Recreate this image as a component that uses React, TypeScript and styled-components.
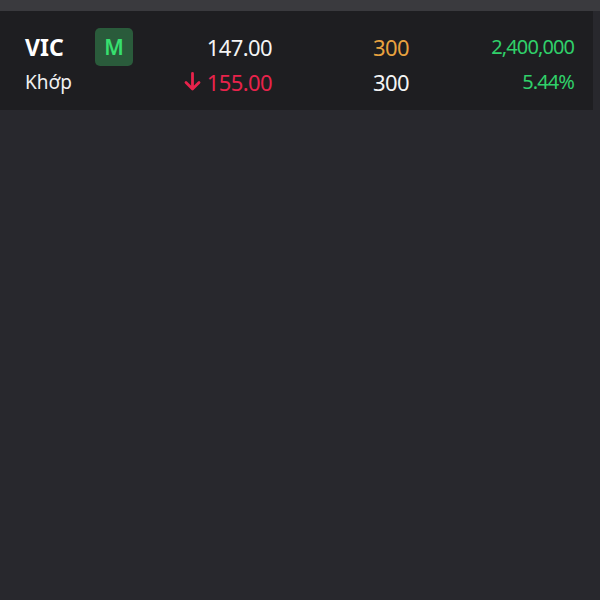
import styled, { createGlobalStyle } from 'styled-components'

const GlobalStyle = createGlobalStyle`
  html, body {
    margin: 0;
    padding: 0;
    background-color: #28282d;
  }
  body {
    font-family: 'Noto Sans', 'Open Sans', sans-serif;
    color: #f2f2f2;
  }
`

const Screen = styled.main`
  width: 600px;
  height: 600px;
  background-color: #28282d;
  overflow: hidden;
`

const TopBar = styled.div`
  height: 11px;
  background-color: #3a3a3e;
`

const Row = styled.section`
  display: grid;
  grid-template-columns: 70px 45px 132px 137px 165px;
  grid-template-rows: 35px 35px;
  align-items: center;
  align-content: start;
  height: 99px;
  padding: 18px 19px 0 25px;
  box-sizing: border-box;
  background-color: #1e1e21;
  margin-right: 7px;
`

const Symbol = styled.span`
  font-size: 23px;
  font-weight: 700;
  color: #ffffff;
`

const Label = styled.span`
  font-size: 19px;
  color: #f0f0f0;
`

const Badge = styled.span`
  display: flex;
  align-items: center;
  justify-content: center;
  width: 38px;
  height: 38px;
  border-radius: 5px;
  background-color: #2a5b3b;
  color: #37e06f;
  font-size: 21px;
  font-weight: 600;
`

const Cell = styled.span<{ $color: string; $small?: boolean }>`
  display: flex;
  align-items: center;
  justify-content: flex-end;
  gap: 6px;
  font-size: ${(p) => (p.$small ? '20px' : '22px')};
  letter-spacing: ${(p) => (p.$small ? '-0.9px' : '-0.6px')};
  color: ${(p) => p.$color};
`

const DownArrow = () => (
  <svg width="17" height="19" viewBox="0 0 17 19" fill="none">
    <path d="M8.5 1.5v15.5M2 10.5l6.5 6.5 6.5-6.5" stroke="#e8234b" strokeWidth="2.8" strokeLinecap="round" strokeLinejoin="round" />
  </svg>
)

const App = () => {
  return (
    <Screen>
      <GlobalStyle />
      <TopBar />
      <Row>
        <Symbol>VIC</Symbol>
        <Badge>M</Badge>
        <Cell $color="#f4f4f4">147.00</Cell>
        <Cell $color="#e9a23f">300</Cell>
        <Cell $color="#30d06a" $small>2,400,000</Cell>
        <Label>Khớp</Label>
        <span />
        <Cell $color="#e8234b">
          <DownArrow />
          155.00
        </Cell>
        <Cell $color="#f4f4f4">300</Cell>
        <Cell $color="#30d06a" $small>5.44%</Cell>
      </Row>
    </Screen>
  )
}

export default App
